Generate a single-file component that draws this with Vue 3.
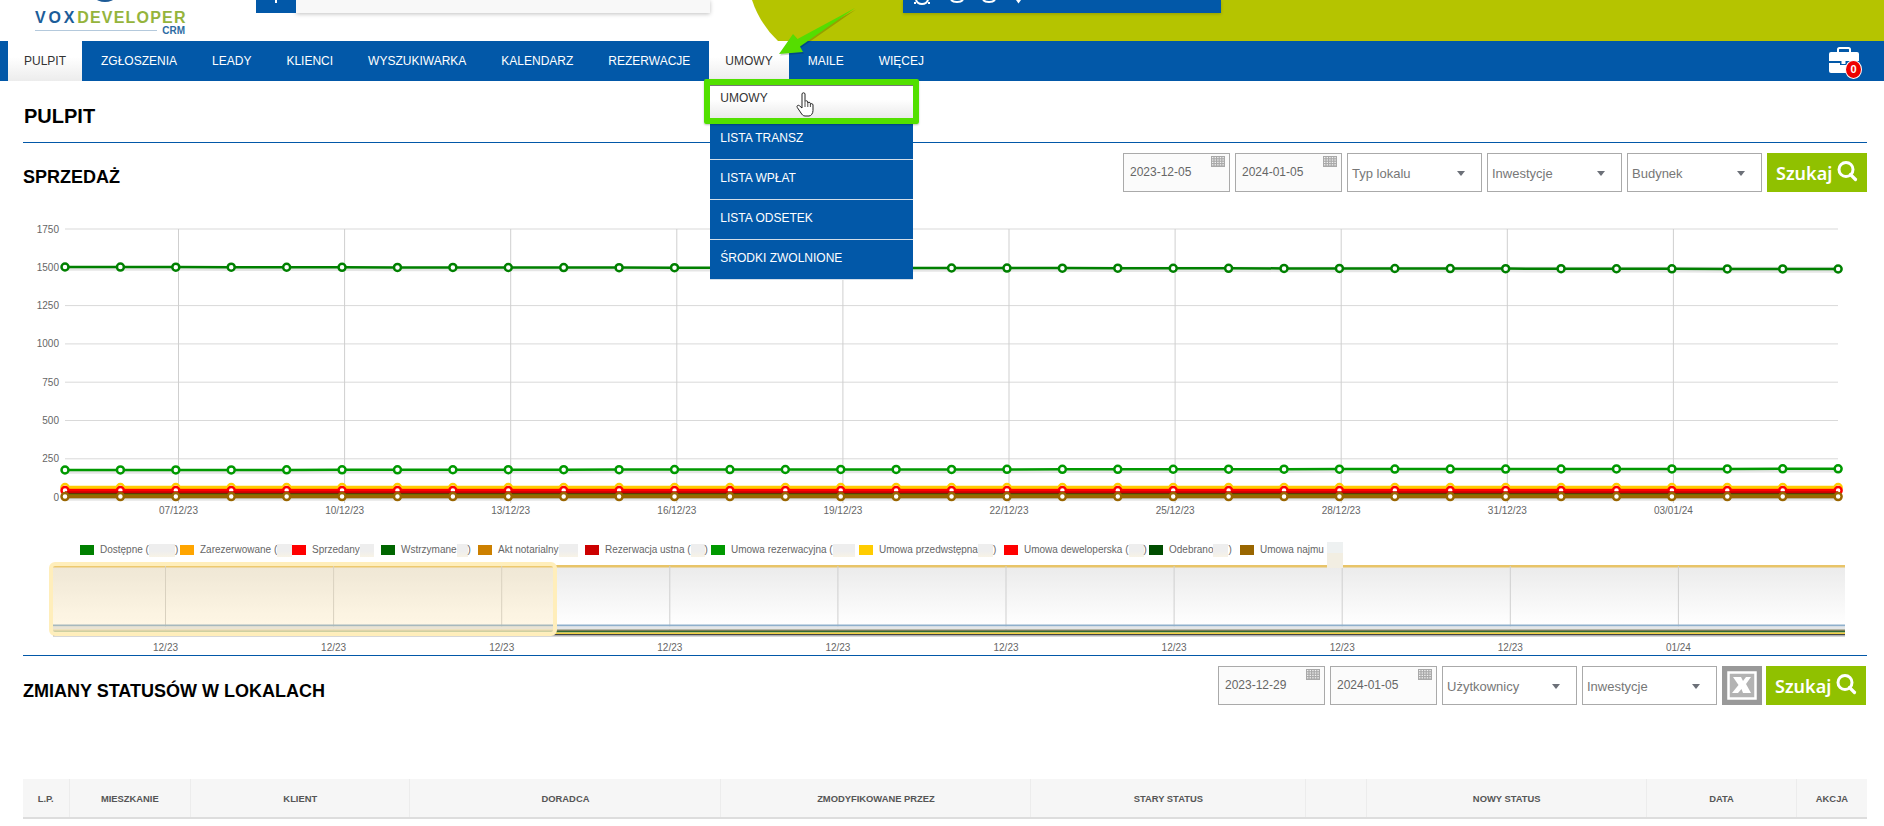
<script setup>
const navItems = ['PULPIT', 'ZGŁOSZENIA', 'LEADY', 'KLIENCI', 'WYSZUKIWARKA', 'KALENDARZ', 'REZERWACJE', 'UMOWY', 'MAILE', 'WIĘCEJ']
const activeTabs = ['PULPIT', 'UMOWY']
const subItems = ['UMOWY', 'LISTA TRANSZ', 'LISTA WPŁAT', 'LISTA ODSETEK', 'ŚRODKI ZWOLNIONE']

const xs = Array.from({ length: 33 }, (_, i) => 65 + i * 55.41)
const pts = (y0, y1 = y0) => xs.map((x, i) => `${x.toFixed(1)},${(y0 + ((y1 - y0) * i) / 32).toFixed(1)}`).join(' ')

const grid = [
  { label: '1750', y: 229 }, { label: '1500', y: 267.3 }, { label: '1250', y: 305.6 }, { label: '1000', y: 343.9 },
  { label: '750', y: 382.2 }, { label: '500', y: 420.5 }, { label: '250', y: 458.8 }, { label: '0', y: 497 }
]
const ticks = ['07/12/23', '10/12/23', '13/12/23', '16/12/23', '19/12/23', '22/12/23', '25/12/23', '28/12/23', '31/12/23', '03/01/24']
  .map((label, i) => ({ label, x: 178.5 + i * 166.1 }))

const series = [
  { color: '#ffcc00', y0: 487.5, w: 3.5, marker: true },
  { color: '#ffa500', y0: 489, w: 2 },
  { color: '#ff0000', y0: 490.5, w: 3, marker: true },
  { color: '#cc0000', y0: 492.8, w: 3 },
  { color: '#006600', y0: 494.4, w: 2 },
  { color: '#cc8000', y0: 495.5, w: 2 },
  { color: '#996600', y0: 496.6, w: 3.5, marker: true },
  { color: '#008000', y0: 267, y1: 269, w: 2.5, marker: true },
  { color: '#009900', y0: 470, y1: 468.8, w: 2.5, marker: true }
].map(s => ({ ...s, points: pts(s.y0, s.y1 ?? s.y0), ys: xs.map((x, i) => s.y0 + (((s.y1 ?? s.y0) - s.y0) * i) / 32) }))

const legend = [
  { color: '#008000', text: 'Dostępne (', blur: 26, tail: ')', w: 100 },
  { color: '#ffa500', text: 'Zarezerwowane (', blur: 15, tail: '', w: 112 },
  { color: '#ff0000', text: 'Sprzedany', blur: 14, tail: '', w: 89 },
  { color: '#006600', text: 'Wstrzymane', blur: 11, tail: ')', w: 97 },
  { color: '#cc8000', text: 'Akt notarialny', blur: 19, tail: '', w: 107 },
  { color: '#cc0000', text: 'Rezerwacja ustna (', blur: 14, tail: ')', w: 126 },
  { color: '#009900', text: 'Umowa rezerwacyjna (', blur: 22, tail: '', w: 148 },
  { color: '#ffcc00', text: 'Umowa przedwstępna', blur: 15, tail: ')', w: 145 },
  { color: '#ff0000', text: 'Umowa deweloperska (', blur: 15, tail: ')', w: 145 },
  { color: '#004d00', text: 'Odebrano', blur: 15, tail: ')', w: 91 },
  { color: '#996600', text: 'Umowa najmu', blur: 16, tail: '', w: 104, tall: true }
]

const navTicks = ['12/23', '12/23', '12/23', '12/23', '12/23', '12/23', '12/23', '12/23', '12/23', '01/24']
  .map((label, i) => ({ label, x: 165.5 + i * 168.1 }))
const navBands = [
  { y: 624.5, h: 2, c: '#8fb0cc' }, { y: 626.5, h: 3, c: '#e4e6e8' }, { y: 629.5, h: 1.5, c: '#7a7a58' },
  { y: 631, h: 1.5, c: '#2f6a35' }, { y: 632.5, h: 1.5, c: '#f2d040' }, { y: 634, h: 1, c: '#444444' }, { y: 635, h: 1.5, c: '#b0b0b0' }
]

const columns = [
  { t: 'L.P.', w: 46 }, { t: 'MIESZKANIE', w: 121.6 }, { t: 'KLIENT', w: 219.4 }, { t: 'DORADCA', w: 311 },
  { t: 'ZMODYFIKOWANE PRZEZ', w: 310 }, { t: 'STARY STATUS', w: 274.7 }, { t: '', w: 61.3 }, { t: 'NOWY STATUS', w: 279.5 },
  { t: 'DATA', w: 150 }, { t: 'AKCJA', w: 70.5 }
]
const calCells = Array.from({ length: 20 }, (_, i) => ({ x: 1 + (i % 5) * 2.6, y: 1 + Math.floor(i / 5) * 2.4 }))
</script>

<template>
  <div class="app">
    <header class="topbar">
      <svg class="olive" width="1132" height="41" viewBox="752 0 1132 41" aria-hidden="true">
        <path d="M752 0 Q760 24 778 41 L1884 41 L1884 0 Z" fill="#b5c400" />
      </svg>
      <div class="logo">
        <span class="logo-dot"></span>
        <div class="logo-word"><span class="vox">VOX</span><span class="dev">DEVELOPER</span></div>
        <div class="logo-sub"><span class="logo-line"></span><span class="crm">CRM</span></div>
      </div>
      <div class="search-btn"><span class="tick"></span></div>
      <div class="search-box"></div>
      <div class="tools">
        <svg width="120" height="13" viewBox="0 0 120 13" aria-hidden="true">
          <g fill="none" stroke="#fff" stroke-width="2">
            <path d="M11 0 C12 3 14 4 17 4 C20 4 22 3 23 0" />
            <path d="M11 3 L9 3 M23 3 L25 3" />
            <path d="M46 0 A7 4 0 0 0 58 0" />
            <path d="M78 0 A7 4 0 0 0 90 0" />
          </g>
          <path d="M111 0 L116 0 L113.5 3.5 Z" fill="#fff" />
        </svg>
      </div>
    </header>

    <nav class="nav">
      <ul class="tabs">
        <li v-for="item in navItems" :key="item" class="tab" :class="{ active: activeTabs.includes(item) }">
          {{ item }}
          <ul v-if="item === 'UMOWY'" class="submenu">
            <li v-for="(sub, i) in subItems" :key="sub" class="subitem" :class="{ hover: i === 0 }">{{ sub }}</li>
          </ul>
        </li>
      </ul>
      <div class="case">
        <svg width="32" height="26" viewBox="0 0 32 26" aria-hidden="true">
          <path d="M10 5 V2.5 A1.5 1.5 0 0 1 11.500 1 H20.500 A1.500 1.500 0 0 1 22 2.500 V5" fill="none" stroke="#fff" stroke-width="2" />
          <path d="M3 5 H29 A2 2 0 0 1 31 7 V14 H1 V7 A2 2 0 0 1 3 5 Z" fill="#fff" />
          <path d="M1 16 H12 V18 H19 V16 H31 V24 A2 2 0 0 1 29 26 H3 A2 2 0 0 1 1 24 Z" fill="#fff" />
          <rect x="13.500" y="14" width="4" height="3" fill="#fff" />
        </svg>
        <span class="badge">0</span>
      </div>
    </nav>

    <main class="main">
      <h1 class="page-title">PULPIT</h1>

      <section class="head-row">
        <h2 class="sec-title">SPRZEDAŻ</h2>
        <div class="filters">
          <div class="field date" v-for="d in ['2023-12-05', '2024-01-05']" :key="d">
            {{ d }}
            <svg class="cal" width="14" height="11" viewBox="0 0 14 11" aria-hidden="true">
              <rect width="14" height="11" fill="#a9a9a9" />
              <rect v-for="(c, i) in calCells" :key="i" :x="c.x" :y="c.y" width="1.400" height="1.200" fill="#f2f2f2" />
            </svg>
          </div>
          <div class="field select" v-for="s in ['Typ lokalu', 'Inwestycje', 'Budynek']" :key="s">
            {{ s }}<span class="caret"></span>
          </div>
          <button class="search">
            Szukaj
            <svg width="22" height="22" viewBox="0 0 22 22" aria-hidden="true">
              <circle cx="10" cy="9.500" r="7" fill="none" stroke="#fff" stroke-width="3" />
              <path d="M14.500 14.500 L19.500 19.500" stroke="#fff" stroke-width="3.200" stroke-linecap="round" />
            </svg>
          </button>
        </div>
      </section>

      <svg class="chart" width="1844" height="320" viewBox="23 215 1844 320">
        <line v-for="g in grid" :key="g.label" x1="65" :x2="1838" :y1="g.y" :y2="g.y" stroke="#d9d9d9" />
        <line v-for="t in ticks" :key="t.label" :x1="t.x" :x2="t.x" y1="229" y2="503" stroke="#cfcfcf" />
        <text v-for="g in grid" :key="'l' + g.label" x="59" :y="g.y + 3.500" text-anchor="end" class="axis">{{ g.label }}</text>
        <text v-for="t in ticks" :key="'t' + t.label" :x="t.x" y="514" text-anchor="middle" class="axis">{{ t.label }}</text>
        <g v-for="s in series" :key="s.color + s.y0">
          <polyline :points="s.points" fill="none" stroke="#000" stroke-opacity=".1" :stroke-width="s.w + 1" transform="translate(0 2)" />
          <polyline :points="s.points" fill="none" :stroke="s.color" :stroke-width="s.w" />
          <template v-if="s.marker">
            <circle v-for="(x, i) in xs" :key="i" :cx="x" :cy="s.ys[i]" r="3.500" fill="#fff" :stroke="s.color" stroke-width="2.500" />
          </template>
        </g>
      </svg>

      <div class="legend">
        <div v-for="l in legend" :key="l.text" class="legend-item" :style="{ width: l.w + 'px' }">
          <span class="swatch" :style="{ background: l.color }"></span>
          <span class="legend-text">{{ l.text }}</span>
          <span class="smudge" :class="{ tall: l.tall }" :style="{ width: l.blur + 'px' }"></span>
          <span v-if="l.tail" class="legend-text">{{ l.tail }}</span>
        </div>
      </div>

      <svg class="navigator" width="1844" height="100" viewBox="23 555 1844 100">
        <defs>
          <linearGradient id="navbg" x1="0" y1="0" x2="0" y2="1">
            <stop offset="0" stop-color="#ebebeb" />
            <stop offset="1" stop-color="#ffffff" />
          </linearGradient>
        </defs>
        <rect x="53" y="567" width="1792" height="58" fill="url(#navbg)" />
        <rect x="53" y="565" width="1792" height="2.500" fill="#e8c468" />
        <line v-for="t in navTicks" :key="t.x" :x1="t.x" :x2="t.x" y1="566" y2="632" stroke="#cfcfcf" />
        <rect v-for="b in navBands" :key="b.y" x="53" :y="b.y" width="1792" :height="b.h" :fill="b.c" />
        <rect x="51" y="564" width="504" height="70" rx="4" fill="#ffd98a" fill-opacity=".22" stroke="#ffeebb" stroke-width="4" />
        <rect x="53" y="629" width="500" height="3.500" fill="#fdf1c9" fill-opacity=".7" />
        <text v-for="t in navTicks" :key="'n' + t.x" :x="t.x" y="650.500" text-anchor="middle" class="axis">{{ t.label }}</text>
      </svg>

      <section class="head-row second">
        <h2 class="sec-title tight">ZMIANY STATUSÓW W LOKALACH</h2>
        <div class="filters">
          <div class="field date" v-for="d in ['2023-12-29', '2024-01-05']" :key="d">
            {{ d }}
            <svg class="cal" width="14" height="11" viewBox="0 0 14 11" aria-hidden="true">
              <rect width="14" height="11" fill="#a9a9a9" />
              <rect v-for="(c, i) in calCells" :key="i" :x="c.x" :y="c.y" width="1.400" height="1.200" fill="#f2f2f2" />
            </svg>
          </div>
          <div class="field select" v-for="s in ['Użytkownicy', 'Inwestycje']" :key="s">
            {{ s }}<span class="caret"></span>
          </div>
          <button class="excel" aria-label="Excel">
            <svg width="30" height="29" viewBox="0 0 30 29" aria-hidden="true">
              <rect x="1.500" y="1.500" width="27" height="26" fill="#b3b3b3" stroke="#fff" stroke-width="2.500" />
              <path d="M6 6 H14 L16 10 L19 6 H24 L19 13 L24 22 H16 L14.500 18 L11 22 H5 L11.500 14 Z" fill="#fff" />
            </svg>
          </button>
          <button class="search">
            Szukaj
            <svg width="22" height="22" viewBox="0 0 22 22" aria-hidden="true">
              <circle cx="10" cy="9.500" r="7" fill="none" stroke="#fff" stroke-width="3" />
              <path d="M14.500 14.500 L19.500 19.500" stroke="#fff" stroke-width="3.200" stroke-linecap="round" />
            </svg>
          </button>
        </div>
      </section>

      <table class="table">
        <colgroup>
          <col v-for="c in columns" :key="c.t" :style="{ width: c.w + 'px' }" />
        </colgroup>
        <thead>
          <tr>
            <th v-for="c in columns" :key="'h' + c.t">{{ c.t }}</th>
          </tr>
        </thead>
      </table>
    </main>

    <svg class="arrow" width="90" height="60" viewBox="772 2 90 60" aria-hidden="true">
      <path d="M855 8 L797.500 39 L793 34 L779 54 L803 52 L799 47 Z" fill="#000" fill-opacity=".18" transform="translate(1 1.500)" />
      <path d="M855 8 L797.500 39 L793 34 L779 54 L803 52 L800 46.500 Z" fill="#55dd00" />
    </svg>

    <svg class="hand" width="19" height="25" viewBox="0 0 19 25" aria-hidden="true">
      <path d="M6 2 C6 .4 9 .4 9 2 V9.500 C9.200 8.500 11.800 8.500 11.800 10 V11 C12 10 14.400 10 14.400 11.500 V12.200 C14.800 11.300 17 11.400 17 13 V18.500 C17 21.500 15 24 13 24 H9 C7 24 6 22.500 5 21 L1.300 15.500 C.3 14 2 12.500 3.500 13.800 L6 16 Z" fill="#fff" stroke="#222" stroke-width="1" stroke-linejoin="round" />
      <path d="M9 10 V15 M11.800 11 V15 M14.400 12 V15" stroke="#222" stroke-width=".8" fill="none" />
    </svg>
  </div>
</template>

<style scoped>
.app {
  position: relative;
  width: 1884px;
  height: 826px;
  overflow: hidden;
  background: #fff;
  font-family: "Liberation Sans", Arial, sans-serif;
  color: #333;
}
.topbar {
  position: relative;
  height: 41px;
  display: flex;
  align-items: flex-start;
}
.olive { position: absolute; left: 752px; top: 0; }
.logo {
  position: relative;
  width: 256px;
  height: 41px;
  flex: none;
  padding-left: 35px;
  box-sizing: border-box;
}
.logo-dot {
  position: absolute;
  left: 96px;
  top: -6px;
  width: 18px;
  height: 8px;
  border-radius: 50%;
  background: #1d5a96;
}
.logo-word {
  padding-top: 9px;
  height: 16px;
  font-size: 16px;
  line-height: 18px;
  font-weight: 700;
  letter-spacing: 1.200px;
  white-space: nowrap;
}
.vox { color: #1c5d99; letter-spacing: 2.800px; }
.dev { color: #95b43c; }
.logo-sub { display: flex; align-items: center; gap: 5px; height: 12px; width: 150px; }
.logo-line { flex: 1; height: 1.500px; background: #b4c9dc; margin-top: -1px; }
.crm { font-size: 10px; line-height: 12px; font-weight: 700; color: #2c6ba3; }
.search-btn {
  position: relative;
  width: 40px;
  height: 13px;
  flex: none;
  background: #0258a8;
}
.tick { position: absolute; left: 19px; top: 0; width: 2px; height: 3px; background: #fff; }
.search-box {
  width: 414px;
  height: 13px;
  flex: none;
  background: #f8f8f8;
  box-shadow: 0 1px 4px rgba(0, 0, 0, .25);
}
.tools {
  position: relative;
  width: 318px;
  height: 13px;
  flex: none;
  margin-left: 193px;
  background: #0258a8;
  box-shadow: 0 1px 3px rgba(0, 0, 0, .2);
}
.tools svg { display: block; margin-left: 2px; }
.nav {
  position: relative;
  z-index: 2;
  height: 40px;
  display: flex;
  align-items: stretch;
  justify-content: space-between;
  background: #0258a8;
  padding-left: 8px;
}
.tabs {
  display: flex;
  gap: 3px;
  margin: 0;
  padding: 0;
  list-style: none;
}
.tab {
  position: relative;
  padding: 0 16px;
  font-size: 12px;
  line-height: 41px;
  color: #fff;
  white-space: nowrap;
}
.tab.active {
  color: #333;
  background: linear-gradient(#fff 40%, #ececec);
}
.submenu {
  position: absolute;
  left: 1px;
  top: 39px;
  width: 203px;
  margin: 0;
  padding: 0;
  list-style: none;
  background: #0258a8;
}
.subitem {
  position: relative;
  height: 40px;
  padding: 11px 10px 0;
  box-sizing: border-box;
  font-size: 12px;
  line-height: 14px;
  color: #fff;
  border-bottom: 1px solid #d3dde8;
}
.subitem.hover {
  color: #333;
  background: linear-gradient(#fff 50%, #e9e9e9);
}
.subitem.hover::after {
  content: "";
  position: absolute;
  left: -6px;
  right: -6px;
  top: -1px;
  bottom: -5px;
  border: 6px solid #52e000;
  border-radius: 2px;
  box-shadow: inset 0 1px 0 #777, 0 1px 2px rgba(0, 0, 0, .25);
}
.case {
  position: relative;
  width: 32px;
  margin-right: 24px;
  padding-top: 6px;
  box-sizing: content-box;
}
.case svg { display: block; }
.badge {
  position: absolute;
  left: 17px;
  top: 19px;
  width: 15px;
  height: 17px;
  border-radius: 50%;
  border: 1px solid #fff;
  background: #ee0000;
  color: #fff;
  font-size: 11px;
  font-weight: 700;
  line-height: 17px;
  text-align: center;
}
.main { padding: 0 17px 0 23px; }
.page-title {
  margin: 0;
  padding: 23px 0 14px 1px;
  font-size: 20px;
  line-height: 24px;
  font-weight: 700;
  color: #000;
  border-bottom: 1px solid #0258a8;
}
.head-row {
  margin-top: 10px;
  height: 39px;
  display: flex;
  justify-content: space-between;
  align-items: flex-start;
}
.sec-title {
  margin: 0;
  padding: 13px 0 0;
  font-size: 18px;
  line-height: 22px;
  font-weight: 700;
  color: #000;
}
.sec-title.tight { padding: 14px 0 0; }
.filters { display: flex; gap: 5px; }
.second .filters { margin-right: 1px; }
.field {
  position: relative;
  height: 39px;
  box-sizing: border-box;
  border: 1px solid #aaa;
  color: #777;
  white-space: nowrap;
}
.date {
  width: 107px;
  padding-left: 6px;
  font-size: 12px;
  line-height: 37px;
  color: #666;
  background: #fbfbfb;
}
.cal { position: absolute; right: 4px; top: 2px; }
.select {
  width: 135px;
  padding-left: 4px;
  font-size: 13px;
  line-height: 40px;
  background: #fff;
}
.caret {
  position: absolute;
  right: 16px;
  top: 17px;
  border-left: 4px solid transparent;
  border-right: 4px solid transparent;
  border-top: 5px solid #6c7078;
}
.search {
  display: flex;
  align-items: center;
  justify-content: flex-start;
  gap: 4px;
  width: 100px;
  height: 39px;
  padding: 0 0 0 9px;
  border: 0;
  background: #90c100;
  color: #fff;
  font-family: "Noto Sans", sans-serif;
  font-size: 18px;
  font-weight: 600;
}
.search svg { margin-top: -3px; flex: none; }
.excel {
  width: 40px;
  height: 39px;
  margin-right: -1px;
  padding: 0;
  border: 0;
  background: #999;
  display: flex;
  align-items: center;
  justify-content: center;
}
.chart { display: block; margin-top: 23px; }
.axis { font-size: 10px; fill: #666; font-family: "Liberation Sans", Arial, sans-serif; }
.legend {
  margin-top: 10px;
  height: 10px;
  padding-left: 57px;
  display: flex;
}
.legend-item {
  flex: none;
  height: 10px;
  display: flex;
  align-items: center;
}
.swatch { flex: none; width: 14px; height: 10px; margin-right: 6px; }
.legend-text { font-size: 10px; line-height: 10px; color: #666; white-space: nowrap; }
.smudge {
  flex: none;
  height: 13px;
  background: linear-gradient(#eeeeee 55%, #f8f3e6);
}
.smudge.tall {
  height: 26px;
  margin-top: 10px;
  margin-left: 3px;
  position: relative;
  z-index: 1;
  background: linear-gradient(#eef1f1 42%, #f2eee2 42%);
}
.navigator { display: block; border-bottom: 1px solid #0258a8; }
.second { margin-top: 10px; }
.table {
  width: 1844px;
  margin-top: 74px;
  table-layout: fixed;
  border-collapse: collapse;
}
.table th {
  height: 38px;
  padding: 0;
  font-size: 9.400px;
  font-weight: 700;
  color: #555;
  background: #f6f6f6;
  border-right: 1px solid #ececec;
  border-bottom: 2px solid #ddd;
  text-align: center;
}
.table th:last-child { border-right: 0; }
.arrow { position: absolute; left: 772px; top: 2px; z-index: 5; }
.hand { position: absolute; left: 796px; top: 92px; z-index: 6; }
</style>
